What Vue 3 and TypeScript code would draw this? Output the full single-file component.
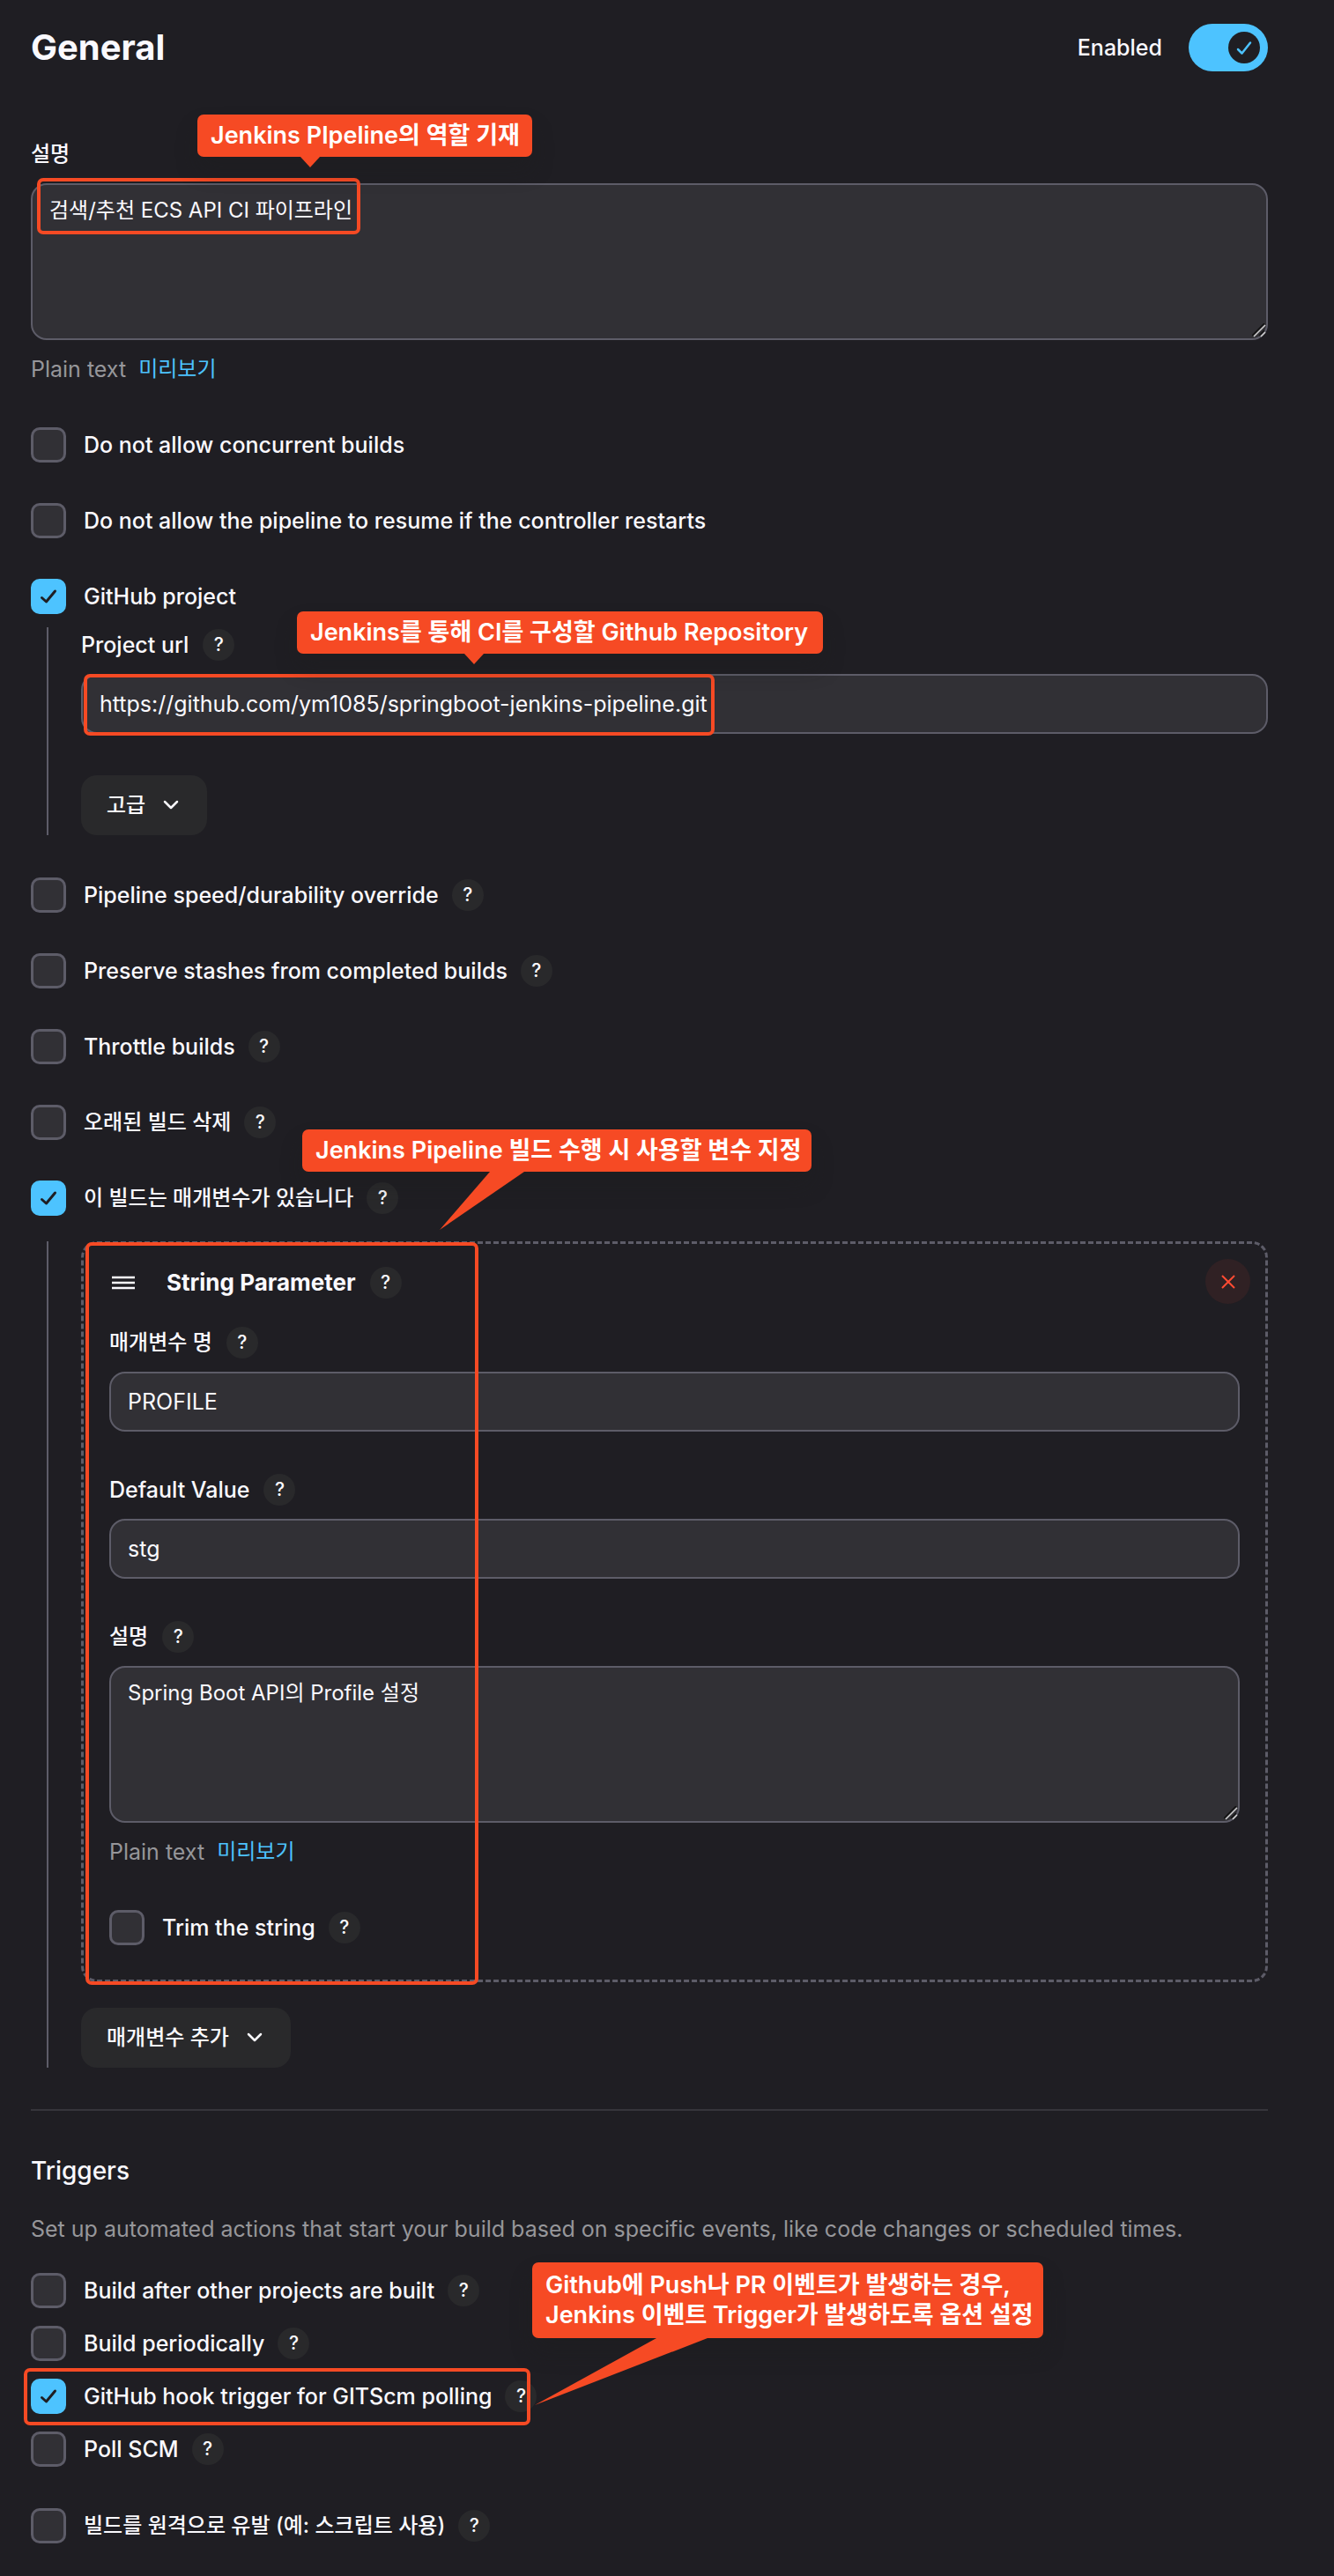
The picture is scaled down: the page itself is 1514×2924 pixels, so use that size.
<script setup lang="ts">
import { reactive, ref } from 'vue'

interface Option {
  id: string
  label: string
  checked: boolean
  help: boolean
  korean?: boolean
  annotated?: boolean
}

const enabled = ref(true)
const description = ref('검색/추천 ECS API CI 파이프라인')
const projectUrl = ref('https://github.com/ym1085/springboot-jenkins-pipeline.git')

const basicOptions = reactive<Option[]>([
  { id: 'concurrent', label: 'Do not allow concurrent builds', checked: false, help: false },
  { id: 'resume', label: 'Do not allow the pipeline to resume if the controller restarts', checked: false, help: false },
  { id: 'github', label: 'GitHub project', checked: true, help: false },
])

const buildOptions = reactive<Option[]>([
  { id: 'durability', label: 'Pipeline speed/durability override', checked: false, help: true },
  { id: 'stashes', label: 'Preserve stashes from completed builds', checked: false, help: true },
  { id: 'throttle', label: 'Throttle builds', checked: false, help: true },
  { id: 'discard', label: '오래된 빌드 삭제', checked: false, help: true, korean: true },
  { id: 'parameterized', label: '이 빌드는 매개변수가 있습니다', checked: true, help: true, korean: true },
])

const parameter = reactive({
  name: 'PROFILE',
  defaultValue: 'stg',
  description: 'Spring Boot API의 Profile 설정',
  trim: false,
})

const triggers = reactive<Option[]>([
  { id: 'after', label: 'Build after other projects are built', checked: false, help: true },
  { id: 'periodic', label: 'Build periodically', checked: false, help: true },
  { id: 'hook', label: 'GitHub hook trigger for GITScm polling', checked: true, help: true, annotated: true },
  { id: 'poll', label: 'Poll SCM', checked: false, help: true },
])

const remote = ref(false)
</script>

<template>
  <main class="page">
    <header class="header">
      <h1>General</h1>
      <label class="toggle">
        <span>Enabled</span>
        <input v-model="enabled" type="checkbox" role="switch" />
        <span class="track">
          <svg class="knob" viewBox="0 0 36 36" aria-hidden="true">
            <circle cx="18" cy="18" r="18" />
            <path d="M11 20 L15.5 24.5 L25 12.5" />
          </svg>
        </span>
      </label>
    </header>

    <section class="field description">
      <div class="label-row"><label class="ko" for="description">설명</label></div>
      <div class="control">
        <textarea id="description" v-model="description" class="ko"></textarea>
        <svg class="grip" viewBox="0 0 16 16" aria-hidden="true">
          <path class="dark" d="M0 14 L14 0 M8 14 L14 8" /><path d="M2 15 L15 2 M10 15 L15 10" />
        </svg>
        <span class="outline outline-description"></span>
      </div>
      <p class="hint">Plain text <a class="ko" href="#preview">미리보기</a></p>
      <div class="callout callout-description">
        Jenkins PIpeline의 역할 기재
        <svg class="tail" viewBox="0 0 22 12" aria-hidden="true"><path d="M0 0 H22 L11 12 Z" /></svg>
      </div>
    </section>

    <div class="options">
      <div v-for="item in basicOptions" :key="item.id" class="option">
        <span class="box">
          <input :id="item.id" v-model="item.checked" type="checkbox" />
          <svg viewBox="0 0 40 40" aria-hidden="true"><path d="M12.5 21.5 L17.5 26 L27.5 14" /></svg>
        </span>
        <label :for="item.id">{{ item.label }}</label>
      </div>
    </div>

    <section class="nested nested-project">
      <div class="field">
        <div class="label-row">
          <label for="project-url">Project url</label>
          <button class="help" type="button" aria-label="Help: Project url">?</button>
        </div>
        <div class="control">
          <input id="project-url" v-model="projectUrl" class="text" type="text" />
          <span class="outline outline-url"></span>
          <div class="callout callout-url">
            Jenkins를 통해 CI를 구성할 Github Repository
            <svg class="tail" viewBox="0 0 22 12" aria-hidden="true"><path d="M0 0 H22 L11 12 Z" /></svg>
          </div>
        </div>
      </div>
      <button class="menu ko" type="button">
        고급
        <svg viewBox="0 0 18 12" aria-hidden="true"><path d="M2 2 L9 9 L16 2" /></svg>
      </button>
    </section>

    <div class="options">
      <div v-for="item in buildOptions" :key="item.id" class="option">
        <span class="box">
          <input :id="item.id" v-model="item.checked" type="checkbox" />
          <svg viewBox="0 0 40 40" aria-hidden="true"><path d="M12.5 21.5 L17.5 26 L27.5 14" /></svg>
        </span>
        <label :for="item.id" :class="{ ko: item.korean }">{{ item.label }}</label>
        <button class="help" type="button" :aria-label="`Help: ${item.label}`">?</button>
      </div>
    </div>

    <section class="nested nested-parameters">
      <div class="control">
        <div class="panel">
          <div class="panel-head">
            <svg class="drag" viewBox="0 0 28 16" aria-hidden="true"><path d="M1 2 H27 M1 8 H27 M1 14 H27" /></svg>
            <h2>String Parameter</h2>
            <button class="help" type="button" aria-label="Help: String Parameter">?</button>
            <button class="remove" type="button" aria-label="Delete">
              <svg viewBox="0 0 16 16" aria-hidden="true"><path d="M1 1 L15 15 M15 1 L1 15" /></svg>
            </button>
          </div>
          <div class="field">
            <div class="label-row">
              <label class="ko" for="param-name">매개변수 명</label>
              <button class="help" type="button" aria-label="Help: 매개변수 명">?</button>
            </div>
            <input id="param-name" v-model="parameter.name" class="text" type="text" />
          </div>
          <div class="field">
            <div class="label-row">
              <label for="param-default">Default Value</label>
              <button class="help" type="button" aria-label="Help: Default Value">?</button>
            </div>
            <input id="param-default" v-model="parameter.defaultValue" class="text" type="text" />
          </div>
          <div class="field">
            <div class="label-row">
              <label class="ko" for="param-description">설명</label>
              <button class="help" type="button" aria-label="Help: 설명">?</button>
            </div>
            <div class="control">
              <textarea id="param-description" v-model="parameter.description" class="ko"></textarea>
              <svg class="grip" viewBox="0 0 16 16" aria-hidden="true">
                <path class="dark" d="M0 14 L14 0 M8 14 L14 8" /><path d="M2 15 L15 2 M10 15 L15 10" />
              </svg>
            </div>
            <p class="hint">Plain text <a class="ko" href="#preview">미리보기</a></p>
          </div>
          <div class="option">
            <span class="box">
              <input id="trim" v-model="parameter.trim" type="checkbox" />
              <svg viewBox="0 0 40 40" aria-hidden="true"><path d="M12.5 21.5 L17.5 26 L27.5 14" /></svg>
            </span>
            <label for="trim">Trim the string</label>
            <button class="help" type="button" aria-label="Help: Trim the string">?</button>
          </div>
        </div>
        <span class="outline outline-parameter"></span>
        <div class="callout callout-parameter">
          Jenkins Pipeline 빌드 수행 시 사용할 변수 지정
          <svg class="tail" viewBox="0 0 96 66" aria-hidden="true"><path d="M57 0 H96 L0 66 Z" /></svg>
        </div>
      </div>
      <button class="menu ko" type="button">
        매개변수 추가
        <svg viewBox="0 0 18 12" aria-hidden="true"><path d="M2 2 L9 9 L16 2" /></svg>
      </button>
    </section>

    <section class="triggers">
      <h2>Triggers</h2>
      <p class="lead">
        Set up automated actions that start your build based on specific events, like code changes or scheduled times.
      </p>
      <div class="trigger-list">
        <div v-for="item in triggers" :key="item.id" class="option">
          <span class="box">
            <input :id="item.id" v-model="item.checked" type="checkbox" />
            <svg viewBox="0 0 40 40" aria-hidden="true"><path d="M12.5 21.5 L17.5 26 L27.5 14" /></svg>
          </span>
          <label :for="item.id">{{ item.label }}</label>
          <button class="help" type="button" :aria-label="`Help: ${item.label}`">?</button>
          <template v-if="item.annotated">
            <span class="outline outline-trigger"></span>
            <div class="callout callout-trigger">
              Github에 Push나 PR 이벤트가 발생하는 경우,<br />Jenkins 이벤트 Trigger가 발생하도록 옵션 설정
              <svg class="tail" viewBox="0 0 196 76" aria-hidden="true"><path d="M138 0 H196 L0 76 Z" /></svg>
            </div>
          </template>
        </div>
      </div>
      <div class="option">
        <span class="box">
          <input id="remote" v-model="remote" type="checkbox" />
          <svg viewBox="0 0 40 40" aria-hidden="true"><path d="M12.5 21.5 L17.5 26 L27.5 14" /></svg>
        </span>
        <label class="ko" for="remote">빌드를 원격으로 유발 (예: 스크립트 사용)</label>
        <button class="help" type="button" aria-label="Help: 빌드를 원격으로 유발">?</button>
      </div>
    </section>
  </main>
</template>

<style>
body {
  background: #1f1e23;
}
</style>

<style scoped>
.page {
  --bg: #1f1e23;
  --text: #faf9fe;
  --muted: #96969a;
  --field: #313035;
  --line: #5d5c68;
  --accent: #4dc3ff;
  --soft: #29292b;
  --mark: #f64a24;
  box-sizing: border-box;
  padding: 27px 75px 37px 35px;
  background: var(--bg);
  color: var(--text);
  font: 500 25px/36px Inter, 'Noto Sans CJK KR', sans-serif;
}

*,
*::before,
*::after {
  box-sizing: border-box;
}

h1,
h2,
p {
  margin: 0;
}

input,
textarea,
button {
  margin: 0;
  font: inherit;
  color: inherit;
}

.ko {
  font-size: 24px;
}

.header {
  display: flex;
  align-items: center;
  justify-content: space-between;
  height: 54px;
}

h1 {
  font-size: 40px;
  font-weight: 700;
  line-height: 54px;
}

.toggle {
  display: flex;
  align-items: center;
  gap: 30px;
}

.toggle input {
  position: absolute;
  opacity: 0;
}

.track {
  display: flex;
  align-items: center;
  padding: 9px;
  width: 90px;
  height: 54px;
  border-radius: 27px;
  background: var(--line);
}

.toggle input:checked + .track {
  justify-content: flex-end;
  background: var(--accent);
}

.knob {
  width: 36px;
  height: 36px;
  fill: var(--bg);
}

.knob path {
  fill: none;
  stroke: var(--accent);
  stroke-width: 2.5;
  stroke-linecap: round;
  stroke-linejoin: round;
}

.field,
.control,
.option {
  position: relative;
}

.description {
  margin-top: 76px;
}

.label-row {
  display: flex;
  align-items: center;
  gap: 16px;
  height: 36px;
  margin-bottom: 15px;
}

.text,
textarea {
  display: block;
  width: 100%;
  border: 2px solid var(--line);
  border-radius: 18px;
  outline: 0;
  background: var(--field);
  font-weight: 400;
}

.text {
  height: 68px;
  padding: 0 19px;
}

textarea {
  height: 178px;
  padding: 11px 19px;
  resize: none;
}

.grip {
  position: absolute;
  right: 2px;
  bottom: 3px;
  width: 16px;
  height: 16px;
  fill: none;
  stroke: #d0d0d0;
  stroke-width: 1.5;
}

.grip .dark {
  stroke: #111;
}

.hint {
  display: flex;
  gap: 14px;
  height: 36px;
  margin-top: 15px;
  color: var(--muted);
  font-weight: 400;
}

.hint a {
  color: var(--accent);
  text-decoration: none;
}

.options {
  display: flex;
  flex-direction: column;
  gap: 46px;
  margin-top: 48px;
}

.option {
  display: flex;
  align-items: center;
  height: 40px;
}

.box {
  display: grid;
  width: 40px;
  height: 40px;
  margin-right: 20px;
}

.box input {
  grid-area: 1 / 1;
  width: 40px;
  height: 40px;
  border: 3px solid var(--line);
  border-radius: 10px;
  background: var(--field);
  appearance: none;
}

.box input:checked {
  border-color: var(--accent);
  background: var(--accent);
}

.box svg {
  grid-area: 1 / 1;
  z-index: 1;
  visibility: hidden;
  fill: none;
  stroke: var(--bg);
  stroke-width: 3;
  stroke-linecap: round;
  stroke-linejoin: round;
  pointer-events: none;
}

.box input:checked + svg {
  visibility: visible;
}

.help {
  flex: none;
  width: 36px;
  height: 36px;
  padding: 0;
  border: 0;
  border-radius: 50%;
  background: var(--soft);
  font-size: 21px;
  font-weight: 500;
  line-height: 36px;
}

.option .help {
  margin-left: 15px;
}

.nested {
  display: flex;
  flex-direction: column;
  align-items: flex-start;
  margin-left: 18px;
  padding-left: 37px;
  border-left: 2px solid var(--line);
}

.nested > .field,
.nested > .control {
  width: 100%;
}

.nested-project {
  gap: 47px;
  margin-top: 15px;
  padding-top: 2px;
}

.nested-parameters {
  gap: 29px;
  margin-top: 29px;
}

.menu {
  display: flex;
  align-items: center;
  gap: 20px;
  height: 68px;
  padding: 0 32px 0 29px;
  border: 0;
  border-radius: 18px;
  background: var(--soft);
}

.menu svg {
  width: 18px;
  height: 12px;
  fill: none;
  stroke: var(--text);
  stroke-width: 2.5;
  stroke-linecap: round;
  stroke-linejoin: round;
}

.panel {
  display: flex;
  flex-direction: column;
  gap: 48px;
  padding: 26px 29px 39px;
  border: 3px dashed var(--line);
  border-radius: 18px;
}

.panel-head {
  position: relative;
  display: flex;
  align-items: center;
  height: 36px;
  margin-bottom: -16px;
}

.panel-head h2 {
  margin: 0 16px 0 35px;
  font-size: 26px;
  font-weight: 700;
}

.drag {
  width: 28px;
  height: 16px;
  margin-left: 2px;
  stroke: var(--text);
  stroke-width: 2.5;
}

.remove {
  position: absolute;
  top: -9px;
  right: -12px;
  display: grid;
  place-items: center;
  width: 51px;
  height: 51px;
  padding: 0;
  border: 0;
  border-radius: 50%;
  background: #302124;
}

.remove svg {
  width: 16px;
  height: 16px;
  stroke: #ff4b33;
  stroke-width: 2;
}

.triggers {
  margin-top: 47px;
  border-top: 2px solid #36353b;
}

.triggers h2 {
  margin-top: 50px;
  font-size: 28px;
  font-weight: 500;
}

.lead {
  margin-top: 30px;
  color: var(--muted);
  font-weight: 400;
}

.trigger-list {
  display: flex;
  flex-direction: column;
  gap: 20px;
  margin: 32px 0 47px;
}

.outline {
  position: absolute;
  border: 4px solid var(--mark);
  border-radius: 7px;
  pointer-events: none;
}

.outline-description {
  top: -6px;
  left: 7px;
  width: 367px;
  height: 64px;
}

.outline-url {
  top: 0;
  left: 3px;
  width: 716px;
  height: 70px;
}

.outline-parameter {
  top: 1px;
  bottom: -3px;
  left: 5px;
  width: 446px;
}

.outline-trigger {
  top: -12px;
  left: -8px;
  width: 575px;
  height: 65px;
}

.callout {
  position: absolute;
  z-index: 2;
  padding: 7px 15px;
  border-radius: 7px;
  background: var(--mark);
  box-shadow: 0 16px 24px rgba(30, 30, 30, 0.3);
  color: #fff;
  font-size: 27px;
  font-weight: 600;
  line-height: 34px;
  white-space: nowrap;
}

.tail {
  position: absolute;
  top: 100%;
  fill: var(--mark);
}

.callout-description {
  top: -27px;
  left: 189px;
  width: 380px;
}

.callout-description .tail {
  left: 117px;
  width: 22px;
}

.callout-url {
  top: -71px;
  left: 245px;
  width: 597px;
}

.callout-url .tail {
  left: 190px;
  width: 22px;
}

.callout-parameter {
  top: -127px;
  left: 251px;
  width: 578px;
}

.callout-parameter .tail {
  left: 156px;
  width: 96px;
}

.callout-trigger {
  top: -132px;
  left: 569px;
  width: 580px;
  padding-block: 9px;
}

.callout-trigger .tail {
  left: 3px;
  width: 196px;
}
</style>
